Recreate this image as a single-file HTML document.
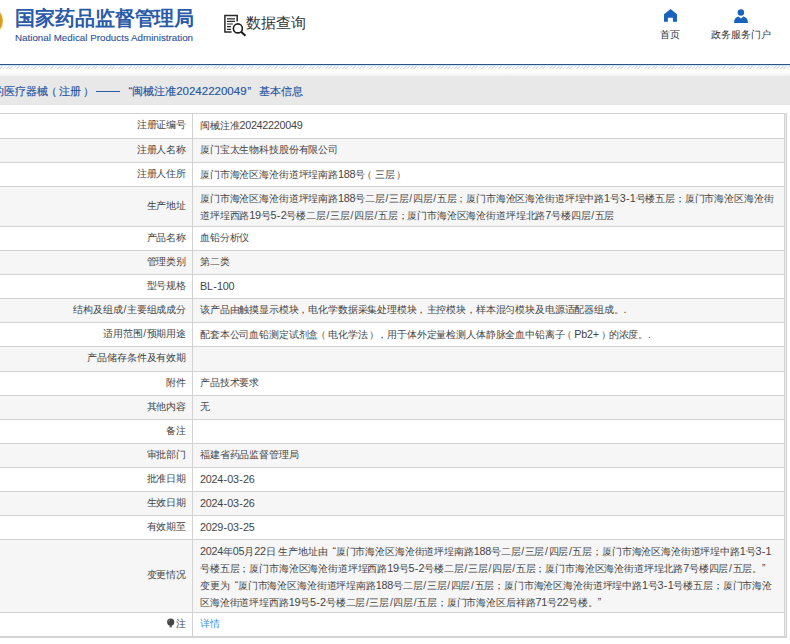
<!DOCTYPE html>
<html><head><meta charset="utf-8">
<style>
*{margin:0;padding:0;box-sizing:border-box}
html,body{width:790px;height:644px;overflow:hidden;background:#fff;font-family:"Liberation Sans",sans-serif;color:#444}
.abs{position:absolute;white-space:nowrap}
#logo{left:-27px;top:5.5px;width:30px;height:30px;border-radius:50%;background:radial-gradient(circle at 50% 50%,#d89a20 0 62%,#f7cf3c 78%,#f0bd2a 100%)}
#t1{left:15px;top:4.6px;font-size:20px;font-weight:700;color:#2a5aa8;line-height:26px;letter-spacing:-0.08px}
#t2{left:15px;top:31.7px;font-size:9.8px;color:#2f5597;line-height:12px;-webkit-text-stroke:0.12px #2f5597}
#sq{left:246px;top:12px;font-size:15px;color:#333;line-height:22px}
#nav1{left:660px;top:29px;font-size:10px;color:#333;line-height:12px}
#nav2{left:711px;top:29px;font-size:10px;color:#333;line-height:12px}
#bl{left:0;top:64px;width:790px;height:1px;background:#2b5384}
#bl2{left:0;top:65px;width:790px;height:1px;background:#cfe6f7}
#hatch{left:0;top:66px;width:790px;height:3px;background:repeating-linear-gradient(135deg,#fff 0 1.2px,#dfe3e6 1.2px 2.4px)}
#grad{left:0;top:69px;width:790px;height:7px;background:linear-gradient(#fff 40%,#f2f2f2)}
#bar{left:0;top:76px;width:790px;height:29px;background:#e8e8e8}
.crumb{top:84px;font-size:11px;color:#2556a2;line-height:14px;-webkit-text-stroke:0.15px #2556a2}
#tbl{left:0;top:113px;width:790px}
.r{position:absolute;left:0;width:784px;border-top:1px solid #d2d2d2}
.r.g{background:#f6f6f6}
.l{position:absolute;left:0;top:0;width:193px;height:100%;border-right:1px solid #d2d2d2;text-align:right;padding-right:6px;font-size:10.2px;letter-spacing:-0.15px;line-height:16.06px;white-space:nowrap}
.v{position:absolute;left:193px;top:0;right:0;padding-left:7px;font-size:10.2px;letter-spacing:-0.15px;line-height:16.06px;white-space:nowrap}
#rb1{left:784px;top:113px;width:3px;height:523px;background:linear-gradient(90deg,#d2d2d2 0 1px,#ebebeb 1px 2px,#d2d2d2 2px)}

#bb1{left:0;top:636px;width:787px;height:2px;background:#d4d4d4}

.s{font-style:normal;margin:0 0.75px}
i.oq{font-style:normal;margin-left:2.4px}
i.hy{font-style:normal;margin:0 0.5px}
b.d{font-weight:normal;font-size:10.8px;letter-spacing:-0.27px}
i.po,i.pc,i.cm,i.bpo,i.bpc{font-style:normal;position:relative}
i.po{left:-2.5px}i.pc{left:1.8px}i.cm{left:-0.3px}i.bpo{left:-2.2px}i.bpc{left:2.2px}
</style></head><body>
<div class="abs" id="logo"></div>
<div class="abs" id="t1">国家药品监督管理局</div>
<div class="abs" id="t2">National Medical Products Administration</div>
<svg class="abs" style="left:223px;top:14px" width="24" height="23" viewBox="0 0 24 23">
 <path d="M8.6 18.1H1.9V1.6H14.2V7.4" fill="none" stroke="#2a2a2a" stroke-width="1.5"/>
 <path d="M4 4.8h8" stroke="#555" stroke-width="1.6"/>
 <path d="M4 7.4h8M4 10h5.8M4 12.6h4M4 15.3h4" stroke="#2a2a2a" stroke-width="1.2"/>
 <circle cx="14.9" cy="14.4" r="4.5" fill="none" stroke="#1e1e1e" stroke-width="1.6"/>
 <path d="M18.1 17.8l4.3 4" stroke="#1e1e1e" stroke-width="2.1"/>
</svg>
<div class="abs" id="sq">数据查询</div>
<svg class="abs" style="left:664px;top:9px" width="13" height="13" viewBox="0 0 13 13"><path d="M6.5 0L0 5.3V12.8h3.9V8.7h5V12.8H13V5.3z" fill="#1862c0"/></svg>
<div class="abs" id="nav1">首页</div>
<svg class="abs" style="left:734px;top:8.5px" width="14" height="14" viewBox="0 0 14 14"><circle cx="6.9" cy="3.55" r="3.25" fill="#1862c0"/><path d="M0 13.9C0 10.2 1.8 8 4.4 7.5L6.9 9.5L9.4 7.5C12.2 8 14 10.2 14 13.9Z" fill="#1862c0"/></svg>
<div class="abs" id="nav2">政务服务门户</div>
<div class="abs" id="bl"></div>
<div class="abs" id="bl2"></div>
<div class="abs" id="hatch"></div>
<div class="abs" id="grad"></div>
<div class="abs" id="bar"></div>
<div class="abs crumb" style="left:-7px">的医疗器械<i class=bpo>（</i>注册<i class=bpc>）</i></div><div class="abs" style="left:96px;top:91px;width:24px;height:1px;background:#2b5ca6"></div><div class="abs crumb" style="left:128.5px">“闽械注准<span style="font-size:11.5px">20242220049</span><span style="margin-left:1px">”</span></div><div class="abs crumb" style="left:259px">基本信息</div>

<div class="abs" id="tbl">
<div class="r" style="top:0.000px;height:25.000px"><div class="l" style="padding-top:3.270px">注册证编号</div><div class="v" style="padding-top:3.270px">闽械注准<b class=d>20242220049</b></div></div>
<div class="r g" style="top:25.000px;height:24.000px"><div class="l" style="padding-top:2.770px">注册人名称</div><div class="v" style="padding-top:2.770px">厦门宝太生物科技股份有限公司</div></div>
<div class="r" style="top:49.000px;height:24.000px"><div class="l" style="padding-top:2.770px">注册人住所</div><div class="v" style="padding-top:2.770px">厦门市海沧区海沧街道坪埕南路<b class=d>188</b>号<i class=po>（</i>三层<i class=pc>）</i></div></div>
<div class="r g" style="top:73.000px;height:40.000px"><div class="l" style="padding-top:10.770px">生产地址</div><div class="v" style="padding-top:2.740px">厦门市海沧区海沧街道坪埕南路<b class=d>188</b>号二层<i class=s>/</i>三层<i class=s>/</i>四层<i class=s>/</i>五层；厦门市海沧区海沧街道坪埕中路<b class=d>1</b>号<b class=d>3<i class=hy>-</i>1</b>号楼五层；厦门市海沧区海沧街<br>道坪埕西路<b class=d>19</b>号<b class=d>5<i class=hy>-</i>2</b>号楼二层<i class=s>/</i>三层<i class=s>/</i>四层<i class=s>/</i>五层；厦门市海沧区海沧街道坪埕北路<b class=d>7</b>号楼四层<i class=s>/</i>五层</div></div>
<div class="r" style="top:113.000px;height:24.000px"><div class="l" style="padding-top:2.770px">产品名称</div><div class="v" style="padding-top:2.770px">血铅分析仪</div></div>
<div class="r g" style="top:137.000px;height:24.000px"><div class="l" style="padding-top:2.770px">管理类别</div><div class="v" style="padding-top:2.770px">第二类</div></div>
<div class="r" style="top:161.000px;height:24.000px"><div class="l" style="padding-top:2.770px">型号规格</div><div class="v" style="padding-top:2.770px"><b class=d>BL<i class=hy>-</i>100</b></div></div>
<div class="r g" style="top:185.000px;height:24.000px"><div class="l" style="padding-top:2.770px">结构及组成<i class=s>/</i>主要组成成分</div><div class="v" style="padding-top:2.770px">该产品由触摸显示模块<i class=cm>，</i>电化学数据采集处理模块<i class=cm>，</i>主控模块<i class=cm>，</i>样本混匀模块及电源适配器组成。.</div></div>
<div class="r" style="top:209.000px;height:24.000px"><div class="l" style="padding-top:2.770px">适用范围<i class=s>/</i>预期用途</div><div class="v" style="padding-top:2.770px">配套本公司血铅测定试剂盒<i class=po>（</i>电化学法<i class=pc>）</i><i class=cm>，</i>用于体外定量检测人体静脉全血中铅离子<i class=po>（</i><b class=d>Pb2+</b><i class=pc>）</i>的浓度。.</div></div>
<div class="r g" style="top:233.000px;height:25.000px"><div class="l" style="padding-top:3.270px">产品储存条件及有效期</div><div class="v" style="padding-top:3.270px"></div></div>
<div class="r" style="top:258.000px;height:24.000px"><div class="l" style="padding-top:2.770px">附件</div><div class="v" style="padding-top:2.770px">产品技术要求</div></div>
<div class="r g" style="top:282.000px;height:24.000px"><div class="l" style="padding-top:2.770px">其他内容</div><div class="v" style="padding-top:2.770px">无</div></div>
<div class="r" style="top:306.000px;height:24.000px"><div class="l" style="padding-top:2.770px">备注</div><div class="v" style="padding-top:2.770px"></div></div>
<div class="r g" style="top:330.000px;height:24.000px"><div class="l" style="padding-top:2.770px">审批部门</div><div class="v" style="padding-top:2.770px">福建省药品监督管理局</div></div>
<div class="r" style="top:354.000px;height:24.000px"><div class="l" style="padding-top:2.770px">批准日期</div><div class="v" style="padding-top:2.770px"><b class=d>2024<i class=hy>-</i>03<i class=hy>-</i>26</b></div></div>
<div class="r g" style="top:378.000px;height:24.000px"><div class="l" style="padding-top:2.770px">生效日期</div><div class="v" style="padding-top:2.770px"><b class=d>2024<i class=hy>-</i>03<i class=hy>-</i>26</b></div></div>
<div class="r" style="top:402.000px;height:24.000px"><div class="l" style="padding-top:2.770px">有效期至</div><div class="v" style="padding-top:2.770px"><b class=d>2029<i class=hy>-</i>03<i class=hy>-</i>25</b></div></div>
<div class="r g" style="top:426.000px;height:73.000px"><div class="l" style="padding-top:27.270px">变更情况</div><div class="v" style="padding-top:3.180px"><b class=d>2024</b>年<b class=d>05</b>月<b class=d>22</b>日 生产地址由 <i class=oq>“</i>厦门市海沧区海沧街道坪埕南路<b class=d>188</b>号二层<i class=s>/</i>三层<i class=s>/</i>四层<i class=s>/</i>五层；厦门市海沧区海沧街道坪埕中路<b class=d>1</b>号<b class=d>3<i class=hy>-</i>1</b><br>号楼五层；厦门市海沧区海沧街道坪埕西路<b class=d>19</b>号<b class=d>5<i class=hy>-</i>2</b>号楼二层<i class=s>/</i>三层<i class=s>/</i>四层<i class=s>/</i>五层；厦门市海沧区海沧街道坪埕北路<b class=d>7</b>号楼四层<i class=s>/</i>五层。”<br>变更为 <i class=oq>“</i>厦门市海沧区海沧街道坪埕南路<b class=d>188</b>号二层<i class=s>/</i>三层<i class=s>/</i>四层<i class=s>/</i>五层；厦门市海沧区海沧街道坪埕中路<b class=d>1</b>号<b class=d>3<i class=hy>-</i>1</b>号楼五层；厦门市海沧<br>区海沧街道坪埕西路<b class=d>19</b>号<b class=d>5<i class=hy>-</i>2</b>号楼二层<i class=s>/</i>三层<i class=s>/</i>四层<i class=s>/</i>五层；厦门市海沧区后祥路<b class=d>71</b>号<b class=d>22</b>号楼。”</div></div>
<div class="r" style="top:499.000px;height:24.000px"><div class="l" style="padding-top:2.770px"><svg width="8" height="10" viewBox="0 0 8 10" style="vertical-align:-1px;margin-right:1.3px"><circle cx="3.7" cy="4.1" r="3.6" fill="#444"/><rect x="2.6" y="7" width="2.2" height="2.4" fill="#555"/><path d="M1.6 3.6A2.2 2.2 0 0 1 3.2 1.7" stroke="#aaa" stroke-width="0.7" fill="none"/></svg>注</div><div class="v" style="padding-top:2.770px"><span style="color:#3a8ee6">详情</span></div></div>
</div>
<div class="abs" id="rb1"></div>
<div class="abs" id="rb2"></div>
<div class="abs" id="bb1"></div>
<div class="abs" id="bb2"></div>
</body></html>
